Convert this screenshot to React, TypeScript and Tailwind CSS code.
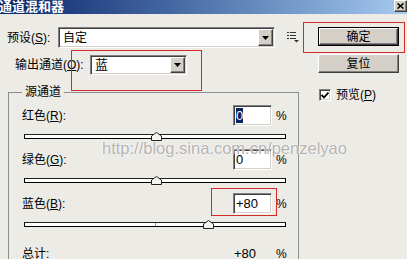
import React from "react";

const U = ({ c }: { c: string }) => <span className="underline underline-offset-[1px]">{c}</span>;

// classic sunken field border
const sunken =
  "border border-t-[#808080] border-l-[#808080] border-b-white border-r-white shadow-[inset_1px_1px_0_#404040,inset_-1px_-1px_0_#d4d0c8]";
const raised =
  "border border-t-white border-l-white border-b-[#404040] border-r-[#404040] shadow-[inset_-1px_-1px_0_#808080]";

const Arrow = () => (
  <div className={`w-[15px] h-full bg-[#d4d0c8] flex items-center justify-center ${raised}`}>
    <svg width="7" height="4" viewBox="0 0 7 4">
      <polygon points="0,0 7,0 3.5,4" fill="#000" />
    </svg>
  </div>
);

const Thumb = ({ x }: { x: number }) => (
  <svg
    width="11"
    height="9"
    viewBox="0 0 11 9"
    className="absolute top-[-3px]"
    style={{ left: x - 5 }}
  >
    <polygon points="0.5,8.5 0.5,4 5.5,0.5 10.5,4 10.5,8.5" fill="#f4f3ef" stroke="#222" />
  </svg>
);

const Channel = ({
  name,
  k,
  value,
  thumb,
  selected,
}: {
  name: string;
  k: string;
  value: string;
  thumb: number;
  selected?: boolean;
}) => (
  <div className="flex flex-col">
    <div className="flex items-center h-[21px]">
      <div className="flex-1 pl-[13px]">
        {name}(<U c={k} />):
      </div>
      <div className={`w-[39px] h-[21px] bg-white flex items-center pl-[2px] text-[13px] ${sunken}`}>
        {selected ? (
          <span className="bg-[#0a246a] text-white leading-[15px]">{value}</span>
        ) : (
          <span className="leading-[15px]">{value}</span>
        )}
      </div>
      <div className="w-[26px] pl-[4px]">%</div>
    </div>
    <div className="relative ml-[15px] mt-[8px] w-[262px] h-[5px] bg-white border border-black border-t-[#222]">
      <div className="absolute left-[130px] top-0 w-px h-[3px] bg-[#9a9a9a]" />
      <Thumb x={thumb} />
    </div>
  </div>
);

export default function App() {
  return (
    <div
      className="relative w-[407px] h-[259px] overflow-hidden bg-[#ecebe6] text-[12px] text-black"
      style={{ fontFamily: '"Liberation Sans", "Noto Sans CJK SC", sans-serif' }}
    >
      {/* title bar */}
      <div className="h-[14px] flex justify-between bg-gradient-to-r from-[#0a246a] to-[#a6caf0]">
        <div className="text-white font-bold text-[13px] leading-[14px] -ml-[1px]">通道混和器</div>
        <div className={`w-[13px] h-[12px] bg-[#d4d0c8] flex items-center justify-center ${raised}`}>
          <svg width="7" height="6" viewBox="0 0 7 6">
            <path d="M0.5 0.5 L6.5 5.5 M6.5 0.5 L0.5 5.5" stroke="#000" strokeWidth="1.6" />
          </svg>
        </div>
      </div>

      <div className="flex pt-[13px]">
        {/* left column */}
        <div className="w-[300px] flex flex-col">
          <div className="flex items-center h-[21px]">
            <div className="w-[58px] pl-[7px]">
              预设(<U c="S" />):
            </div>
            <div className={`w-[217px] h-[21px] bg-white flex items-center ${sunken}`}>
              <div className="flex-1 pl-[4px]">自定</div>
              <div className="h-[17px] mr-[1px]">
                <Arrow />
              </div>
            </div>
            <svg width="13" height="11" viewBox="0 0 13 11" className="ml-[12px]">
              <rect x="0" y="0" width="2" height="1" fill="#333" />
              <rect x="3" y="0" width="6" height="1" fill="#333" />
              <rect x="0" y="3" width="2" height="1" fill="#333" />
              <rect x="3" y="3" width="6" height="1" fill="#333" />
              <rect x="0" y="6" width="2" height="1" fill="#333" />
              <rect x="3" y="6" width="6" height="1" fill="#333" />
              <polygon points="7,8 12,8 9.5,10.5" fill="#333" />
            </svg>
          </div>

          <div className="flex items-center h-[20px] mt-[7px]">
            <div className="w-[90px] pl-[15px]">
              输出通道(<U c="O" />):
            </div>
            <div className={`w-[97px] h-[20px] bg-white flex items-center ${sunken}`}>
              <div className="flex-1 pl-[4px] text-[13px]">蓝</div>
              <div className="h-[16px] mr-[1px]">
                <Arrow />
              </div>
            </div>
          </div>

          <fieldset className="ml-[8px] mt-[9px] w-[291px] h-[200px] border border-[#8e8e8e] border-b-0">
            <legend className="ml-[13px] px-[3px] leading-[16px]">源通道</legend>
            <div className="flex flex-col gap-[10px] mt-[5px]">
              <Channel name="红色" k="R" value="0" thumb={131} selected />
              <Channel name="绿色" k="G" value="0" thumb={131} />
              <Channel name="蓝色" k="B" value="+80" thumb={183} />
            </div>
            <div className="flex items-center h-[16px] mt-[19px]">
              <div className="flex-1 pl-[13px]">总计:</div>
              <div className="w-[40px] text-[13px]">+80</div>
              <div className="w-[24px] pl-[2px]">%</div>
            </div>
          </fieldset>
        </div>

        {/* right column */}
        <div className="ml-[18px] w-[81px] flex flex-col">
          <div className="h-[19px] border border-black">
            <div className={`h-full bg-[#d4d0c8] flex items-center justify-center ${raised}`}>确定</div>
          </div>
          <div className={`h-[19px] mt-[8px] bg-[#d4d0c8] flex items-center justify-center ${raised}`}>复位</div>
          <div className="flex items-center mt-[16px] ml-[1px] h-[12px]">
            <div className={`w-[12px] h-[12px] bg-white flex items-center justify-center ${sunken}`}>
              <svg width="8" height="7" viewBox="0 0 8 7">
                <path d="M0.5 3 L3 5.5 L7.5 0.5" stroke="#000" strokeWidth="1.8" fill="none" />
              </svg>
            </div>
            <div className="ml-[5px]">
              预览(<U c="P" />)
            </div>
          </div>
        </div>
      </div>

      {/* watermark */}
      <div className="absolute left-[102px] top-[139px] text-[16.5px] leading-[19px] text-[#b3b3b3] [text-shadow:0_0_1px_#fff,0_0_2px_#fff] pointer-events-none">
        http://blog.sina.com.cn/penzelyao
      </div>

      {/* red annotation boxes */}
      <div className="absolute left-[71px] top-[50px] w-[131px] h-[41px] border border-[#d42a2a] pointer-events-none" />
      <div className="absolute left-[303px] top-[22px] w-[102px] h-[31px] border border-[#d42a2a] pointer-events-none" />
      <div className="absolute left-[211px] top-[188px] w-[66px] h-[28px] border border-[#d42a2a] pointer-events-none" />
    </div>
  );
}
